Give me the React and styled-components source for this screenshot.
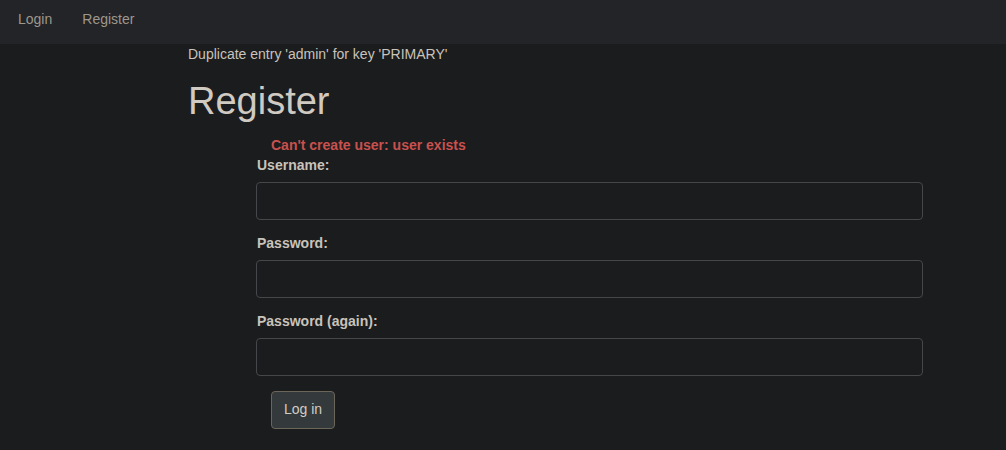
import React from "react";
import styled, { createGlobalStyle } from "styled-components";

const Global = createGlobalStyle`
  html, body { margin: 0; padding: 0; background: #1b1c1e; }
  body { font-family: "Liberation Sans", Arial, sans-serif; font-size: 14px; color: #c8c3bb; }
  * { box-sizing: border-box; }
`;

const Nav = styled.nav`
  height: 44px;
  background: #232427;
  display: flex;
  align-items: center;
  padding-left: 18px;
  gap: 30px;
`;

const NavLink = styled.a`
  color: #9d978d;
  font-size: 14px;
  text-decoration: none;
  line-height: 20px;
  margin-top: -6px;
`;

const Main = styled.main`
  padding-left: 188px;
  padding-top: 1px;
`;

const Flash = styled.div`
  font-size: 14px;
  color: #c8c3bb;
  line-height: 18px;
`;

const Title = styled.h1`
  font-size: 38px;
  font-weight: 400;
  color: #cfcac2;
  margin: 18px 0 0;
  line-height: 40px;
`;

const Form = styled.form`
  margin-left: 68px;
  width: 667px;
  display: flex;
  flex-direction: column;
`;

const ErrorText = styled.div`
  color: #c9514e;
  font-weight: bold;
  font-size: 14px;
  line-height: 18px;
  padding-left: 15px;
  margin-top: 15px;
`;

const Label = styled.label`
  font-weight: bold;
  color: #c8c3bb;
  font-size: 14px;
  line-height: 18px;
  padding-left: 1px;
  margin-top: ${(p) => (p.$first ? "2px" : "14px")};
  margin-bottom: 8px;
`;

const Input = styled.input`
  height: 38px;
  width: 100%;
  background: #1b1c1e;
  border: 1px solid #45474b;
  border-radius: 4px;
  color: #c8c3bb;
  padding: 6px 12px;
  font-size: 14px;
  font-family: inherit;
`;

const Button = styled.button`
  align-self: flex-start;
  margin-top: 15px;
  margin-left: 15px;
  height: 38px;
  padding: 0 12px 3px;
  background: #34393c;
  border: 1px solid #6b655a;
  border-radius: 4px;
  color: #d2cdc5;
  font-family: "Liberation Sans", Arial, sans-serif;
  font-size: 14px;
`;

export default function App() {
  return (
    <>
      <Global />
      <Nav>
        <NavLink href="#">Login</NavLink>
        <NavLink href="#">Register</NavLink>
      </Nav>
      <Main>
        <Flash>Duplicate entry 'admin' for key 'PRIMARY'</Flash>
        <Title>Register</Title>
        <Form onSubmit={(e) => e.preventDefault()}>
          <ErrorText>Can't create user: user exists</ErrorText>
          <Label $first>Username:</Label>
          <Input type="text" />
          <Label>Password:</Label>
          <Input type="password" />
          <Label>Password (again):</Label>
          <Input type="password" />
          <Button type="submit">Log in</Button>
        </Form>
      </Main>
    </>
  );
}
